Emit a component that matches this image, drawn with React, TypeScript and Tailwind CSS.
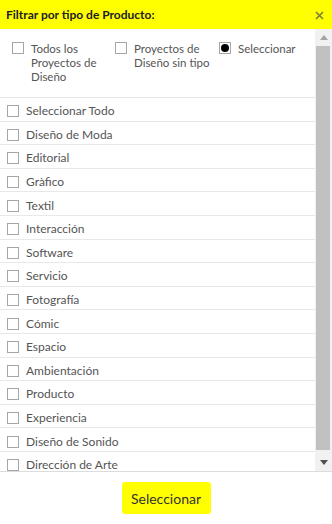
import React from 'react';

const tipos = [
  'Seleccionar Todo',
  'Diseño de Moda',
  'Editorial',
  'Gràfico',
  'Textil',
  'Interacción',
  'Software',
  'Servicio',
  'Fotografía',
  'Cómic',
  'Espacio',
  'Ambientación',
  'Producto',
  'Experiencia',
  'Diseño de Sonido',
  'Dirección de Arte',
];

function Box({ checked = false }: { checked?: boolean }) {
  return (
    <span className="w-[12px] h-[12px] shrink-0 border border-[#a6a6a6] bg-white flex items-center justify-center">
      {checked && <span className="w-[8px] h-[8px] rounded-full bg-black" />}
    </span>
  );
}

export default function App() {
  return (
    <div className="w-[332px] h-[524px] bg-white flex flex-col font-['Lato',sans-serif] text-[11.5px] text-[#555]">
      <div className="h-[29px] shrink-0 bg-[#ffff00] flex items-center justify-between pl-[6px] pr-[8px]">
        <span className="font-bold text-[12px] text-[#222]">Filtrar por tipo de Producto:</span>
        <svg width="9" height="9" viewBox="0 0 9 9" className="mt-[2px]">
          <path d="M1 1L8 8M8 1L1 8" stroke="#7d7d3a" strokeWidth="1.6" />
        </svg>
      </div>

      <div className="h-[443px] shrink-0 flex border-b border-[#dcdcdc]">
        <div className="flex-1 overflow-hidden">
          <div className="h-[68px] pt-[13px] pl-[12px] grid grid-cols-[103px_104px_1fr] leading-[14px]">
            <label className="flex items-start gap-[7px]">
              <Box />
              <span>Todos los<br />Proyectos de<br />Diseño</span>
            </label>
            <label className="flex items-start gap-[7px]">
              <Box />
              <span>Proyectos de<br />Diseño sin tipo</span>
            </label>
            <label className="flex items-start gap-[7px]">
              <Box checked />
              <span>Seleccionar</span>
            </label>
          </div>
          {tipos.map((t) => (
            <div key={t} className="h-[23.6px] border-t border-[#e8e8e8] flex items-center pt-[4px] pl-[7px] gap-[7px]">
              <Box />
              <span className="text-[12px]">{t}</span>
            </div>
          ))}
        </div>

        <div className="w-[17px] shrink-0 bg-[#f1f1f1] flex flex-col">
          <div className="h-[17px] flex items-center justify-center">
            <svg width="8" height="5" viewBox="0 0 8 5">
              <path d="M0 5L4 0L8 5Z" fill="#a3a3a3" />
            </svg>
          </div>
          <div className="h-[404px] ml-[1px] mr-[2px] bg-[#c1c1c1]" />
          <div className="flex-1" />
          <div className="h-[17px] flex items-center justify-center">
            <svg width="8" height="5" viewBox="0 0 8 5">
              <path d="M0 0L8 0L4 5Z" fill="#505050" />
            </svg>
          </div>
        </div>
      </div>

      <div className="flex-1 flex items-center justify-center">
        <button className="w-[89px] h-[32px] rounded-[3px] bg-[#ffff00] text-[14px] text-[#333]">
          Seleccionar
        </button>
      </div>
    </div>
  );
}
